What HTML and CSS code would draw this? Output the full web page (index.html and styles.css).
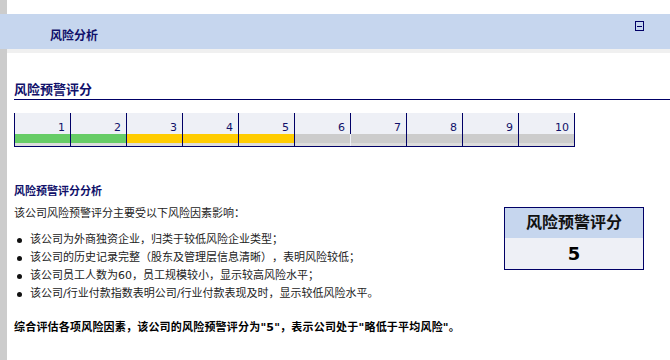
FILE: index.html
```html
<!DOCTYPE html>
<html>
	<head>
		<meta charset="UTF-8">
		<title>风险分析</title>
		<link rel="stylesheet" href="styles.css">
	</head>
	<body>
		<div class="page">
			<header class="bar">
				<div class="bar-title">风险分析</div>
				<div class="bar-btn"><span></span></div>
			</header>
			<div class="bar-shadow"></div>

			<div class="content">
				<h2 class="sec-title">风险预警评分</h2>

				<div class="scale">
					<div class="cell green"><span>1</span></div>
					<div class="cell green"><span>2</span></div>
					<div class="cell yellow"><span>3</span></div>
					<div class="cell yellow"><span>4</span></div>
					<div class="cell yellow"><span>5</span></div>
					<div class="cell grey"><span>6</span></div>
					<div class="cell grey short"><span>7</span></div>
					<div class="cell grey"><span>8</span></div>
					<div class="cell grey"><span>9</span></div>
					<div class="cell grey"><span>10</span></div>
				</div>

				<h3 class="sub-title">风险预警评分分析</h3>

				<div class="analysis">
					<div class="text">
						<p>该公司风险预警评分主要受以下风险因素影响：</p>
						<ul>
							<li>该公司为外商独资企业，归类于较低风险企业类型；</li>
							<li>该公司的历史记录完整（股东及管理层信息清晰），表明风险较低；</li>
							<li>该公司员工人数为60，员工规模较小，显示较高风险水平；</li>
							<li>该公司/行业付款指数表明公司/行业付款表现及时，显示较低风险水平。</li>
						</ul>
					</div>
					<div class="score-box">
						<div class="score-head">风险预警评分</div>
						<div class="score-val">5</div>
					</div>
				</div>

				<p class="summary">综合评估各项风险因素，该公司的风险预警评分为"5"，表示公司处于"略低于平均风险"。</p>
			</div>
		</div>
	</body>
</html>
```

FILE: styles.css
```css
*{
	margin: 0;
	padding: 0;
	box-sizing: border-box;
}
body{
	font-family: "DejaVu Sans", "Noto Sans CJK SC", sans-serif;
	font-size: 11px;
	color: #222;
	background: #fff;
	text-spacing-trim: space-all;
}
.page{
	border-left: 7px solid #cccccc;
	min-height: 360px;
	padding-top: 14px;
	width: 670px;
}
.bar{
	margin-left: -7px;
	height: 35px;
	background: #c6d6ee;
	display: flex;
	align-items: center;
	position: relative;
}
.bar-title{
	padding-left: 50px;
	font-size: 12px;
	font-weight: bold;
	color: #10106a;
	margin-top: 5px;
}
.bar-btn{
	position: absolute;
	top: 7px;
	right: 26px;
	width: 9px;
	height: 10px;
	border: 1px solid #000066;
	display: flex;
	align-items: center;
	justify-content: center;
}
.bar-btn span{
	width: 5px;
	height: 1px;
	background: #000066;
}
.bar-shadow{
	height: 4px;
	background: #f0f0f0;
}
.content{
	padding-left: 7px;
}
.sec-title{
	margin-top: 28px;
	font-size: 13px;
	font-weight: bold;
	color: #10106a;
	line-height: 18px;
	border-bottom: 1px solid #000066;
}
.scale{
	margin-top: 13px;
	display: flex;
	width: 561px;
	border-right: 1px solid #000066;
	border-bottom: 1px solid #000066;
}
.cell{
	width: 56px;
	height: 33px;
	border-left: 1px solid #000066;
	background: #eef0f6;
	display: flex;
	flex-direction: column;
}
.cell span{
	height: 21px;
	line-height: 29px;
	text-align: right;
	padding-right: 5px;
	color: #10106a;
	font-size: 11px;
}
.cell::after{
	content: "";
	height: 12px;
	border-bottom: 3px solid #dcdcdc;
}
.green::after{ background: #66cc66; }
.yellow::after{ background: #ffcc00; }
.grey::after{ background: #cccccc; }
.cell.short{
	border-left-color: #eef0f6;
	position: relative;
}
.cell.short::before{
	content: "";
	position: absolute;
	left: -1px;
	top: 0;
	height: 21px;
	border-left: 1px solid #000066;
}
.sub-title{
	margin-top: 38px;
	font-size: 11px;
	font-weight: bold;
	color: #10106a;
	line-height: 14px;
}
.analysis{
	display: flex;
	align-items: flex-start;
}
.text{
	width: 490px;
}
.text p{
	margin-top: 7px;
	line-height: 16px;
}
.text ul{
	list-style: none;
	margin-top: 9px;
}
.text li{
	line-height: 18px;
	padding-left: 16px;
	position: relative;
}
.text li::before{
	content: "";
	position: absolute;
	left: 3px;
	top: 7px;
	width: 5px;
	height: 5px;
	border-radius: 50%;
	background: #111;
}
.score-box{
	margin-top: 8px;
	width: 140px;
	border: 1px solid #000066;
}
.score-head{
	height: 30px;
	background: #c6d6ee;
	font-size: 16px;
	font-weight: bold;
	color: #111;
	text-align: center;
	line-height: 30px;
}
.score-val{
	height: 31px;
	background: #eef0f6;
	font-size: 18px;
	font-weight: bold;
	color: #000;
	text-align: center;
	line-height: 31px;
}
.summary{
	margin-top: 17px;
	font-weight: bold;
	color: #000;
	line-height: 16px;
	letter-spacing: 0.2px;
}
```
